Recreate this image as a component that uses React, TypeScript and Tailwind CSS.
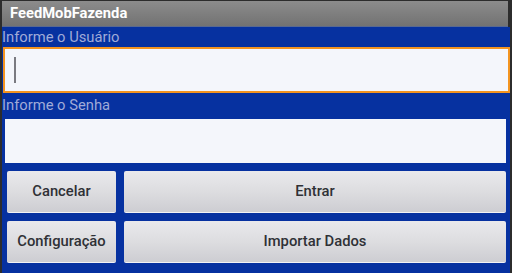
import React from "react";

function Btn({ label, className }: { label: string; className: string }) {
  return (
    <button
      className={
        "h-[42px] rounded-[2px] bg-gradient-to-b from-[#e9e9ec] via-[#dddde0] to-[#cdcdd2] border-b border-[#f2f2f4] text-[14.75px] font-medium text-[#2f3136] flex items-center justify-center " +
        className
      }
    >
      {label}
    </button>
  );
}

function App() {
  return (
    <div className="w-[512px] h-[273px] bg-[#2c2c2c] pl-[2px] pr-[2px] pt-[1px] flex flex-col font-['Roboto',sans-serif] overflow-hidden">
      <div className="h-[26px] mr-[2px] bg-gradient-to-b from-[#8c8c8c] to-[#727272] border-b border-[#5a6a90] px-[8px] flex items-center text-white font-bold text-[14.75px]">
        FeedMobFazenda
      </div>
      <div className="flex-1 bg-[#0631a0] flex flex-col">
        <div className="h-[20px] flex items-center text-[14.75px] text-[#a0abd8]">
          Informe o Usuário
        </div>
        <div className="h-[46px] ml-[1px] border-2 border-[#f39420] bg-[#f4f6fb] flex items-center pl-[9px]">
          <div className="w-[2px] h-[26px] bg-[#7a7a80]" />
        </div>
        <div className="h-[26px] flex items-end pb-[3px] text-[14.75px] text-[#a0abd8]">
          Informe o Senha
        </div>
        <div className="h-[44px] ml-[3px] mr-[4px] bg-[#f4f6fb]" />
        <div className="flex gap-[8px] ml-[5px] mr-[4px] mt-[8px]">
          <Btn label="Cancelar" className="w-[109px]" />
          <Btn label="Entrar" className="flex-1" />
        </div>
        <div className="flex gap-[8px] ml-[5px] mr-[4px] mt-[8px]">
          <Btn label="Configuração" className="w-[109px]" />
          <Btn label="Importar Dados" className="flex-1" />
        </div>
      </div>
    </div>
  );
}

export default App;
